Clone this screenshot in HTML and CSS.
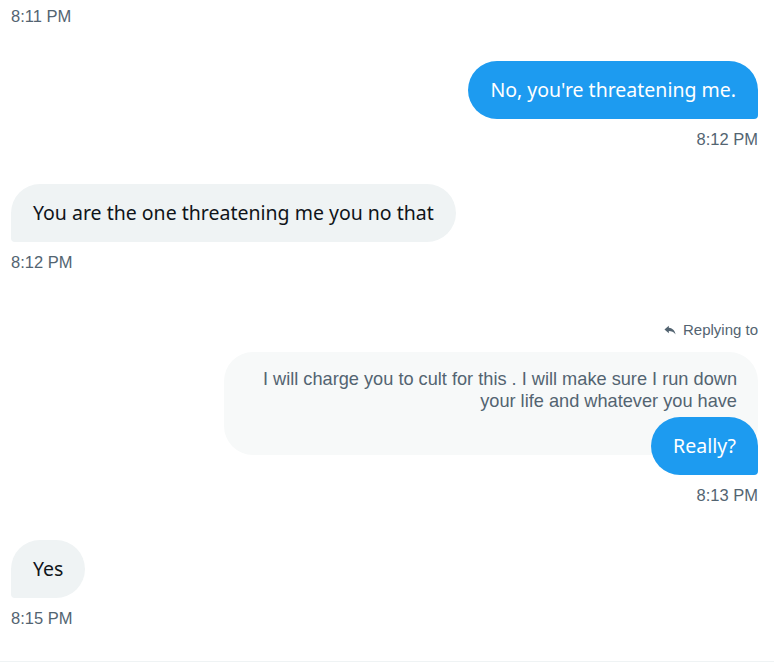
FILE: index.html
```html
<!DOCTYPE html>
<html lang="en">
<head>
    <meta charset="UTF-8">
    <meta name="viewport" content="width=device-width, initial-scale=1.0">
    <title>Messages</title>
    <link rel="stylesheet" href="styles.css">
</head>
<body>
<div class="thread">
    <!-- tidligere besked -->
    <div class="msg them">
        <div class="time">8:11 PM</div>
    </div>

    <div class="msg me">
        <div class="bubble blue">No, you're threatening me.</div>
        <div class="time">8:12 PM</div>
    </div>

    <div class="msg them before-reply">
        <div class="bubble gray">You are the one threatening me you no that</div>
        <div class="time">8:12 PM</div>
    </div>

    <!-- svar med citat -->
    <div class="msg me">
        <div class="replying">
            <svg viewBox="0 0 24 24" width="14" height="14"><path d="M10 4.5 2.5 11l7.5 6.5v-4c4.5 0 8.5 1.3 11.5 6-0.8-6-4.3-10.8-11.5-11.5z" fill="#536471"/></svg>
            <span>Replying to</span>
        </div>
        <div class="quote">I will charge you to cult for this . I will make sure I run down your life and whatever you have</div>
        <div class="bubble blue reply">Really?</div>
        <div class="time">8:13 PM</div>
    </div>

    <div class="msg them">
        <div class="bubble gray">Yes</div>
        <div class="time">8:15 PM</div>
    </div>
</div>
<div class="composer"></div>
</body>
</html>
```

FILE: styles.css
```css
body {
    margin: 0;
    background: #fff;
    font-family: "Liberation Sans", Arial, sans-serif;
}
.thread {
    display: flex;
    flex-direction: column;
    padding: 6px 16px 0 11px;
    height: 661px;
    box-sizing: border-box;
}
.msg {
    display: flex;
    flex-direction: column;
    margin-bottom: 35px;
}
.msg.them {
    align-items: flex-start;
}
.msg.me {
    align-items: flex-end;
}
.msg.before-reply {
    margin-bottom: 48px;
}
.time {
    font-size: 16.5px;
    line-height: 20px;
    color: #536471;
}
.bubble {
    font-family: "Noto Sans", "Open Sans", sans-serif;
    font-size: 19.5px;
    line-height: 24px;
    padding: 17px 22px;
    border-radius: 29px;
    margin-bottom: 10px;
}
.blue {
    background: #1d9bf0;
    color: #fff;
    border-bottom-right-radius: 4px;
}
.gray {
    background: #eff3f4;
    color: #0f1419;
    border-bottom-left-radius: 4px;
}
.replying {
    display: flex;
    align-items: center;
    gap: 6px;
    font-size: 15px;
    line-height: 20px;
    color: #536471;
    margin-bottom: 12px;
}
.quote {
    width: 534px;
    box-sizing: border-box;
    background: #f7f9f9;
    color: #536471;
    font-size: 18.2px;
    line-height: 22px;
    text-align: right;
    padding: 16px 21px 43px 33px;
    border-radius: 29px;
}
.reply {
    margin-top: -38px;
    position: relative;
}
.composer {
    border-top: 1px solid #eff3f4;
    height: 5px;
}
```
